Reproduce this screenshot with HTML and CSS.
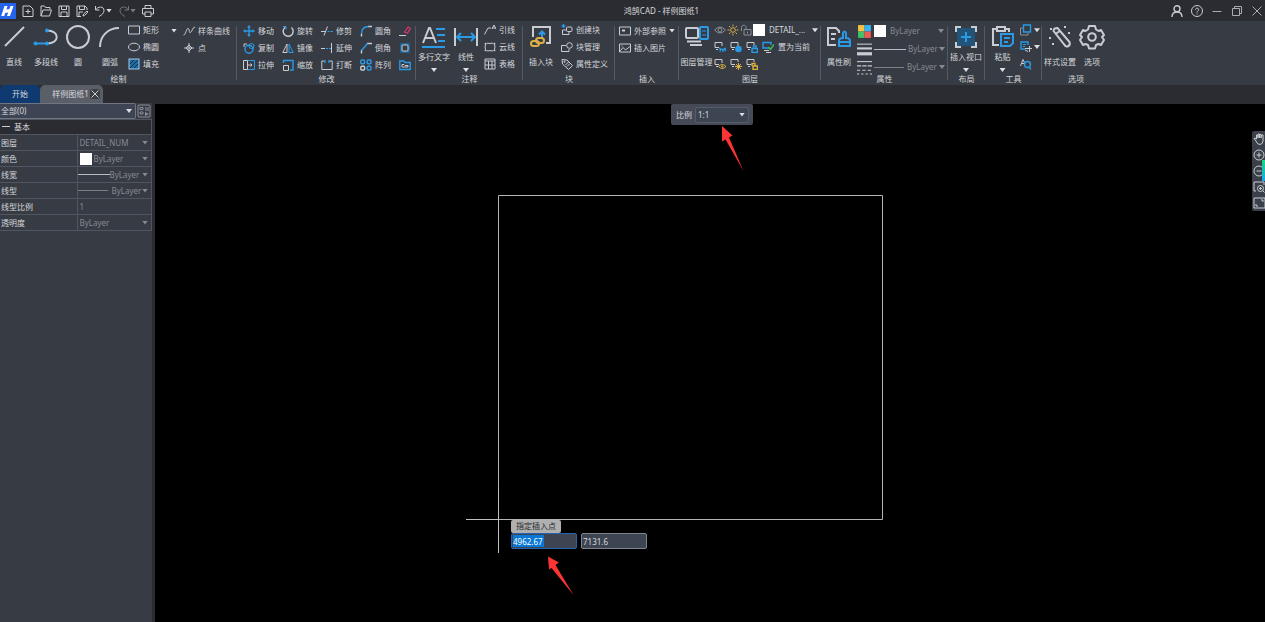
FILE: index.html
```html
<!DOCTYPE html>
<html lang="zh-CN">
<head>
<meta charset="utf-8">
<title>鸿鹄CAD - 样例图纸1</title>
<link rel="stylesheet" href="styles.css">
</head>
<body>
<div class="app">
<header class="titlebar">
  <div class="quick">
    <svg class="logo" viewBox="0 0 16 16"><rect width="16" height="16" fill="#2563eb"/><path d="M4.500 3h3l-1 3.500 3-.5 1-3h3l-3.500 10h-3l1.200-3.600-3 .6-1 3h-3z" fill="#fff"/></svg>
    <button aria-label="新建"><svg class="ic" viewBox="0 0 12 12"><path class="w" d="M1 1h7l3 3v7.500H1zM6 4v5M3.500 6.500h5"/></svg></button>
    <button aria-label="打开"><svg class="ic" viewBox="0 0 12 12"><path class="w" d="M1 11V1h3.500l1 1.500h4.500v2M1 11l2-6h8.500L9.500 11z"/></svg></button>
    <button aria-label="保存"><svg class="ic" viewBox="0 0 12 12"><path class="w" d="M1 1h10v10.500H1zM3.500 1v3.500h5V1M3 11V7h6v4"/></svg></button>
    <button aria-label="另存为"><svg class="ic" viewBox="0 0 12 12"><path class="w" d="M11 5V3L9 1H1v10.500h4M3.500 1v3.500h5V1M3 11V7h4M7 11l.5-2L11 6l1 1-3.500 3.500z"/></svg></button>
    <button aria-label="撤销" class="drop"><svg class="ic" viewBox="0 0 12 12"><path class="w" d="M1.500 1v4h4M1.500 5C4 1 10 1 10 5.500 10 8 8 10 5 11.500"/></svg><i class="tri"></i></button>
    <button aria-label="重做" class="drop dim"><svg class="ic" viewBox="0 0 12 12"><path class="w" d="M10.500 1v4h-4M10.500 5C8 1 2 1 2 5.500 2 8 4 10 7 11.500"/></svg><i class="tri"></i></button>
    <button aria-label="打印"><svg class="ic" viewBox="0 0 12 12"><path class="w" d="M3 3.500V.5h6v3M3 9H.5V3.500h11V9H9M3 7h6v4.500H3z"/></svg></button>
  </div>
  <h1 class="caption">鸿鹄CAD - 样例图纸1</h1>
  <div class="window">
    <button aria-label="用户"><svg class="ic" viewBox="0 0 12 12"><circle class="w mv" cx="6" cy="3.800" r="3"/><path class="w mv" d="M1 12c0-3 2-5 5-5s5 2 5 5"/></svg></button>
    <button aria-label="帮助"><svg class="ic" viewBox="0 0 12 12"><circle class="w" cx="6" cy="6" r="5.500"/><path class="w" d="M4.500 4.800C4.500 2.500 8 2.700 7.700 5 7.500 6 6 6 6 7.500M6 8.500v1"/></svg></button>
    <button aria-label="最小化"><svg class="ic g" viewBox="0 0 12 12"><path class="w" d="M1.500 6.500h9"/></svg></button>
    <button aria-label="还原"><svg class="ic g" viewBox="0 0 12 12"><path class="w" d="M1.500 3.500h7v7h-7zM3.500 3.500v-2h7v7h-2"/></svg></button>
    <button aria-label="关闭"><svg class="ic g" viewBox="0 0 12 12"><path class="w" d="M1.500 1.500l9 9M10.500 1.500l-9 9"/></svg></button>
  </div>
</header>

<nav class="ribbon">
  <section class="group g-draw">
    <div class="tools">
      <button class="big nar"><svg viewBox="0 0 26 26"><path class="w hv" d="M4 22L23 3"/></svg>直线</button>
      <button class="big"><svg viewBox="0 0 26 26"><path class="b hv" d="M2 19.500h13"/><path class="w hv" d="M14 19.500c13 0 13-13 0-13"/><circle class="bf" cx="2.500" cy="19.500" r="2"/><circle class="bf" cx="14" cy="19.500" r="2"/><circle class="bf" cx="14" cy="6.500" r="2"/></svg>多段线</button>
      <button class="big nar"><svg viewBox="0 0 26 26"><circle class="w hv" cx="13" cy="13" r="11"/></svg>圆</button>
      <button class="big"><svg viewBox="0 0 26 26"><path class="w hv" d="M3 23C3 12 11 4 22 4"/></svg>圆弧</button>
      <div class="col">
        <button class="sm"><svg class="ic" viewBox="0 0 12 12"><path class="w" d="M.5 2h11v8H.5z"/></svg>矩形</button>
        <button class="sm"><svg class="ic" viewBox="0 0 12 12"><ellipse class="w" cx="6" cy="6" rx="5.500" ry="3.800"/></svg>椭圆</button>
        <button class="sm"><svg class="ic" viewBox="0 0 12 12"><rect x="1" y="1" width="10" height="10" fill="#1d6ea8" stroke="#a9c4dc"/><path d="M2 6l4-4M2 10l8-8M6 10l4-4" stroke="#142c42"/></svg>填充</button>
      </div>
      <div class="col arrowcol"><button class="sm" aria-label="更多矩形"><i class="tri"></i></button></div>
      <div class="col">
        <button class="sm"><svg class="ic" viewBox="0 0 12 12"><path class="w" d="M.5 10C3 10 3 3.500 5 3.500s.5 5 2.500 4S9 2.500 12 2"/></svg>样条曲线</button>
        <button class="sm"><svg class="ic" viewBox="0 0 12 12"><path class="w" d="M6 1v10M1 6h10M6 3L9 6 6 9 3 6z"/></svg>点</button>
      </div>
    </div>
    <h2>绘制</h2>
  </section>

  <section class="group g-modify">
    <div class="tools grid5">
      <button class="sm"><svg class="ic" viewBox="0 0 12 12"><path class="b mv" d="M6 1v10M1 6h10"/><path class="bf" d="M6 0l2 2.500H4zM6 12l2-2.500H4zM0 6l2.500-2v4zM12 6L9.500 4v4z"/></svg>移动</button>
      <button class="sm"><svg class="ic" viewBox="0 0 12 12"><path class="w mv" d="M3.500 2A5 5 0 1 0 9.500 2.500"/><path class="b" d="M1 1.500h3v3"/></svg>旋转</button>
      <button class="sm"><svg class="ic" viewBox="0 0 12 12"><path class="w" d="M0 6.500h4M3 10.500l3.500-9"/><path class="b" d="M6.500 6.500h2M9.500 6.500H12"/></svg>修剪</button>
      <button class="sm"><svg class="ic" viewBox="0 0 12 12"><path class="w mv" d="M1.500 11.500V8.500M8 1.500h4"/><path class="b mv" d="M1.500 9c0-5 3-7.500 7-7.500"/></svg>圆角</button>
      <button class="sm" aria-label="删除"><svg class="ic" viewBox="0 0 12 12"><path class="w" d="M0 10.500h7"/><path d="M5.500 7L9 2l2.500 1.500L8.500 8z" fill="none" stroke="#d1396b" stroke-width="1.300"/></svg></button>
      <button class="sm"><svg class="ic" viewBox="0 0 12 12"><circle class="b mv" cx="6" cy="7.200" r="4"/><path class="w" d="M1 5V2h3"/><circle class="b" cx="8.500" cy="4" r="2.500"/></svg>复制</button>
      <button class="sm"><svg class="ic" viewBox="0 0 12 12"><path class="w" d="M5 2v8.500H.8z"/><path class="b" d="M7 2v8.500h4.200z" fill="#1d6ea8"/></svg>镜像</button>
      <button class="sm"><svg class="ic" viewBox="0 0 12 12"><path class="w" d="M0 6.500h4M10.500 1v10"/><path class="b" d="M5 6.500h2M8 6.500h2"/></svg>延伸</button>
      <button class="sm"><svg class="ic" viewBox="0 0 12 12"><path class="w mv" d="M1.500 11.500V8M7 1.500h5"/><path class="b mv" d="M1.500 8.500l6-7"/></svg>倒角</button>
      <button class="sm" aria-label="分解"><svg class="ic" viewBox="0 0 12 12"><rect x="1" y="1" width="10" height="10" rx="1.500" fill="#1f6595"/><rect x="3" y="3" width="6" height="6" rx="1" fill="#373b43" stroke="#c9ccd1"/></svg></button>
      <button class="sm"><svg class="ic" viewBox="0 0 12 12"><path class="b" d="M4.500 1.500h7v9h-7"/><path class="w" d="M4.500 1.500h-4v9h4zM4.500 6H9M7.500 4.500L9 6 7.500 7.500"/></svg>拉伸</button>
      <button class="sm"><svg class="ic" viewBox="0 0 12 12"><path class="b mv" d="M1.500 4V1.500h9.500V11H8"/><path class="w" d="M1.500 6.500h5v5h-5z"/></svg>缩放</button>
      <button class="sm"><svg class="ic" viewBox="0 0 12 12"><path class="w" d="M3.500 2H.8v8.500h10.400V2H8.500"/><path class="b mv" d="M4 1v3M8 1v3"/></svg>打断</button>
      <button class="sm"><svg class="ic" viewBox="0 0 12 12"><rect class="w mv" x=".8" y="7.200" width="3.800" height="3.800" rx="1"/><rect class="b mv" x=".8" y="1" width="3.800" height="3.800" rx="1"/><rect class="b mv" x="7.200" y="1" width="3.800" height="3.800" rx="1"/><rect class="b mv" x="7.200" y="7.200" width="3.800" height="3.800" rx="1"/></svg>阵列</button>
      <button class="sm" aria-label="偏移"><svg class="ic" viewBox="0 0 12 12"><path class="b mv" d="M.8 2h4L6 3.500h5.200v7H.8z"/><path class="w" d="M3 8V5.500h2l1 1h3V8z"/></svg></button>
    </div>
    <h2>修改</h2>
  </section>

  <section class="group g-note">
    <div class="tools">
      <button class="big drp"><svg viewBox="0 0 26 26"><path class="w hv" d="M2 19L8 4h1l6 15M4 14h9"/><path class="b hv" d="M15 5h9M16 11h8M17 17h7M1 23h23"/></svg>多行文字<i class="tri"></i></button>
      <button class="big nar drp"><svg viewBox="0 0 26 26"><path class="w hv" d="M2 4v18M24 4v18"/><path class="b hv" d="M4 13h18M8 9l-4 4 4 4M18 9l4 4-4 4"/></svg>线性<i class="tri"></i></button>
      <div class="col">
        <button class="sm"><svg class="ic" viewBox="0 0 12 12"><path class="w" d="M.5 10.500L4 4h3M8 5l2-4 2 4M8.500 4h3"/></svg>引线</button>
        <button class="sm"><svg class="ic" viewBox="0 0 12 12"><path class="w" d="M1 2q1.500 1.500 3 0 2 1.500 4 0 1.500 1.500 3 0-1 2 0 4-1 2 0 4-1.500-1-3 0-2-1-4 0-1.500-1-3 0 1-2 0-4 1-2 0-4z"/></svg>云线</button>
        <button class="sm"><svg class="ic" viewBox="0 0 12 12"><path class="w" d="M1 1h10v10H1zM1 3h10M1 7h10M4.500 3v8M8 3v8"/></svg>表格</button>
      </div>
    </div>
    <h2>注释</h2>
  </section>

  <section class="group g-block">
    <div class="tools">
      <button class="big"><svg viewBox="0 0 26 26"><path class="w hv" d="M5 13V3h17v16h-4"/><path class="b hv" d="M14 14V8M11 10.500L14 7.500l3 3"/><rect class="y hv" x="3" y="17" width="8" height="5" rx="2.500"/><rect class="y hv" x="8" y="14" width="8" height="5" rx="2.500"/></svg>插入块</button>
      <div class="col">
        <button class="sm"><svg class="ic" viewBox="0 0 12 12"><path class="b mv" d="M2.500 0v4M.5 2h4"/><path class="w" d="M1.500 6v4.500H8V8M1.500 6H5"/><rect class="w" x="5.500" y="3" width="5.500" height="4.500" rx="1"/></svg>创建块</button>
        <button class="sm"><svg class="ic" viewBox="0 0 12 12"><path class="w" d="M5 4.500H.5v6H8V8"/><circle class="w" cx="8.500" cy="4.500" r="2.800"/></svg>块管理</button>
        <button class="sm"><svg class="ic" viewBox="0 0 12 12"><path class="w" d="M1 1.500l5 .5 5.500 5.500-4 4L1.500 6zM4.500 7l3-3M6 8.500l3-3"/><circle class="w" cx="3.500" cy="3.700" r=".7"/></svg>属性定义</button>
      </div>
    </div>
    <h2>块</h2>
  </section>

  <section class="group g-insert">
    <div class="tools">
      <div class="col">
        <button class="sm"><svg class="ic" viewBox="0 0 12 12"><path class="w" d="M.5 2h11v8H.5z"/><path d="M3 4.500h3v2H3z" fill="#c9ccd1"/></svg>外部参照<i class="tri"></i></button>
        <button class="sm"><svg class="ic" viewBox="0 0 12 12"><path class="w" d="M.5 2h11v8H.5zM1 9l3-3.500L6.500 8 11 4.500M3 3.500v1"/></svg>插入图片</button>
      </div>
    </div>
    <h2>插入</h2>
  </section>

  <section class="group g-layer">
    <div class="tools">
      <button class="big"><svg viewBox="0 0 26 26"><rect class="w hv" x="2" y="4" width="12" height="10" rx="1"/><path class="w hv" d="M3 17.500h14M6 21h12"/><rect class="b hv" x="16" y="3" width="8" height="12" rx="1"/><path class="b" d="M18 7h4M18 11h4"/></svg>图层管理</button>
      <div class="col">
        <div class="line">
          <button aria-label="可见"><svg class="ic" viewBox="0 0 12 12"><path class="w dimw" d="M.5 6Q6 0 11.500 6 6 12 .5 6z"/><circle class="w dimw" cx="6" cy="6" r="2"/></svg></button>
          <button aria-label="冻结"><svg class="ic" viewBox="0 0 12 12"><circle class="y" cx="6" cy="6" r="2.300"/><path class="y" d="M6 .5v2M6 9.500v2M.5 6h2M9.500 6h2M2 2l1.500 1.500M8.500 8.500L10 10M10 2L8.500 3.500M3.500 8.500L2 10"/></svg></button>
          <button aria-label="锁定"><svg class="ic" viewBox="0 0 12 12"><path class="w dimw" d="M4 5.500h7v5.500H4zM1.500 7V3.500c0-3 4.500-3 4.500 0v2M7.500 7.500v2"/></svg></button>
          <span class="swatch"></span>
          <span class="sel lay"><select aria-label="当前图层"><option>DETAIL_...</option></select></span>
        </div>
        <div class="line wide">
          <button aria-label="关闭图层"><svg class="ic" viewBox="0 0 12 12"><path class="w" d="M5 6.500H1v-5h7V5M2 8.500h2"/><path class="b mv" d="M5 7q3.500 3 7 0M6 10.500l.5-2M9 11V9M11.500 10L11 8"/></svg></button>
          <button aria-label="冻结图层"><svg class="ic" viewBox="0 0 12 12"><path class="w" d="M5 6.500H1v-5h7V5M2 8.500h2"/><circle class="bf" cx="8.500" cy="8" r="3.300"/></svg></button>
          <button aria-label="锁定图层"><svg class="ic" viewBox="0 0 12 12"><path class="w" d="M5 6.500H1v-5h7V4M2 8.500h2"/><path class="b mv" d="M6 7.500h5.500v4H6zM7.500 7V5H10v2"/></svg></button>
          <button class="txt"><svg class="ic" viewBox="0 0 12 12"><path class="b mv" d="M7 7H1V1.500h8V4"/><path class="w" d="M2 9.500h5M4 11.500h5"/><path d="M6.500 6l2 2.500L12 3.500" fill="none" stroke="#3fb950" stroke-width="1.500"/></svg>置为当前</button>
        </div>
        <div class="line wide">
          <button aria-label="打开图层"><svg class="ic" viewBox="0 0 12 12"><path class="w" d="M5 6.500H1v-5h7V5M2 8.500h2"/><path class="y" d="M4.500 8.500q3.700-4 7.500 0-3.800 4-7.500 0z"/><circle class="y" cx="8.300" cy="8.500" r=".8"/></svg></button>
          <button aria-label="解冻图层"><svg class="ic" viewBox="0 0 12 12"><path class="w" d="M5 6.500H1v-5h7V4M2 8.500h2"/><path class="y" d="M8.500 5v7M5 8.500h7M6 6l5 5M11 6l-5 5"/></svg></button>
          <button aria-label="解锁图层"><svg class="ic" viewBox="0 0 12 12"><path class="w" d="M5 6.500H1v-5h7V4M2 8.500h2"/><path class="y mv" d="M7 8h4.500v3.500H7zM6 8V5.500h3V8"/></svg></button>
        </div>
      </div>
    </div>
    <h2>图层</h2>
  </section>

  <section class="group g-attr">
    <div class="tools">
      <button class="big"><svg viewBox="0 0 26 26"><path class="w hv" d="M10 21H2V4h8l3 3v2M5 10h5M5 15h4"/><path class="b hv" d="M13 22v-5q0-3 4-3V9q1.500-3 3 0v5q4 0 4 3v5zM13 18h11"/></svg>属性刷</button>
      <div class="col tall">
        <div class="line">
          <svg class="ic mid" viewBox="0 0 14 14"><path fill="#f6c445" d="M1 1h6v6H1z"/><path fill="#35b5f5" d="M7 1h6v6H7z"/><path fill="#3fc26b" d="M1 7h6v6H1z"/><path fill="#ee5a52" d="M7 7h6v6H7z"/></svg>
          <span class="swatch"></span>
          <span class="sel by"><select aria-label="颜色"><option>ByLayer</option></select></span>
        </div>
        <div class="line">
          <svg class="ic mid" viewBox="0 0 14 14"><path d="M0 2h14" stroke="#c9ccd1"/><path d="M0 6h14" stroke="#c9ccd1" stroke-width="2"/><path d="M0 11h14" stroke="#c9ccd1" stroke-width="3"/></svg>
          <span class="rule"></span>
          <span class="sel by"><select aria-label="线宽"><option>ByLayer</option></select></span>
        </div>
        <div class="line">
          <svg class="ic mid" viewBox="0 0 14 14"><path class="w" d="M0 1.500h14"/><path class="w" stroke-dasharray="4 1" d="M0 5.500h14"/><path class="w" stroke-dasharray="3 2" d="M0 9.500h14"/><path class="w" stroke-dasharray="2 2" d="M0 13h14"/></svg>
          <span class="rule thin"></span>
          <span class="sel by"><select aria-label="线型"><option>ByLayer</option></select></span>
        </div>
      </div>
    </div>
    <h2>属性</h2>
  </section>

  <section class="group g-layout">
    <div class="tools">
      <button class="big drp"><svg viewBox="0 0 26 26"><rect x="4" y="4" width="18" height="18" fill="#22547a"/><path class="w hv" d="M3 8V3h5M18 3h5v5M23 18v5h-5M8 23H3v-5"/><path class="b hv" d="M13 8v10M8 13h10"/></svg>插入视口<i class="tri"></i></button>
    </div>
    <h2>布局</h2>
  </section>

  <section class="group g-tools">
    <div class="tools">
      <button class="big drp"><svg viewBox="0 0 26 26"><path class="w hv" d="M9 21H3V5h4M15 5h4v3M7 3h8v4H7z"/><path class="b hv" d="M11 10h12v9l-3 3h-9zM14 14h6M14 18h4"/></svg>粘贴<i class="tri"></i></button>
      <div class="col">
        <button class="sm tight" aria-label="复制"><svg class="ic" viewBox="0 0 12 12"><path class="w dimw" d="M3.500 4h-3v7H8V9"/><path class="b mv" d="M3.500 1h7v7h-7z"/></svg><i class="tri"></i></button>
        <button class="sm tight" aria-label="剪切"><svg class="ic" viewBox="0 0 12 12"><path class="b mv" d="M5 8H1V1h7v3"/><path class="b" d="M3 3.500h3M3 5.500h2"/><path class="w" d="M5 7.500h7M9.500 5v6M5 9l3 1.500"/></svg><i class="tri"></i></button>
        <button class="sm tight" aria-label="查找"><svg class="ic" viewBox="0 0 12 12"><path class="w" d="M.5 8L3 1.500 5 6M1.500 5.500H4"/><circle class="b mv" cx="7.500" cy="6.500" r="3"/><path class="b mv" d="M9 9l2 2.500"/></svg></button>
      </div>
    </div>
    <h2>工具</h2>
  </section>

  <section class="group g-opt">
    <div class="tools">
      <button class="big"><svg viewBox="0 0 26 26"><path class="w hv" d="M6.500 7q0-3 4-3l12 14q1 3-1 4t-3 0zM8.500 10l5-3.500"/><path class="w hv" d="M3 13v2M3 5h2M17 3h2M22 8v2M6 19v2"/></svg>样式设置</button>
      <button class="big nar"><svg viewBox="0 0 26 26"><path class="w hv" stroke-linejoin="round" d="M10 2h6l1 3.500 2.500 1.500L22 6l3 5-2 2 2 3-3 5-2.500-1L17 21l-1 3.500h-6L9 21l-2.500-1L4 21l-3-5 2-3-2-2 3-5 2.500 1L9 5.500z"/><circle class="w hv" cx="13" cy="13" r="3.800"/></svg>选项</button>
    </div>
    <h2>选项</h2>
  </section>
</nav>

<div class="tabs">
  <button class="tab home">开始</button>
  <button class="tab doc">样例图纸1<svg viewBox="0 0 10 10"><rect width="10" height="10" rx="2" fill="#3b3e45"/><path class="w" d="M1.500 1.500l7 7M8.500 1.500l-7 7"/></svg></button>
</div>

<main class="work">
  <aside class="panel">
    <div class="pick">
      <span class="sel all"><select aria-label="选择集"><option>全部(0)</option></select></span>
      <button aria-label="快速选择"><svg viewBox="0 0 14 14"><rect class="w dimw" x="1" y="1" width="12" height="12" rx="1"/><path class="w dimw" d="M3 3.500h3v2H3zM3 8h3v2H3zM8 4h4M8 6h4"/><path d="M8 8l4 2-4 2z" fill="#8b8f96"/></svg></button>
    </div>
    <table class="props">
      <colgroup><col class="names"><col></colgroup>
      <thead><tr><th colspan="2"><span class="minus"></span>基本</th></tr></thead>
      <tbody>
        <tr><th>图层</th><td><span class="sel"><select aria-label="图层"><option>DETAIL_NUM</option></select></span></td></tr>
        <tr><th>颜色</th><td><div class="cell"><span class="swatch"></span><span class="sel"><select aria-label="颜色"><option>ByLayer</option></select></span></div></td></tr>
        <tr><th>线宽</th><td><div class="cell"><span class="rule"></span><span class="sel"><select aria-label="线宽"><option>ByLayer</option></select></span></div></td></tr>
        <tr><th>线型</th><td><div class="cell"><span class="rule thin"></span><span class="sel"><select aria-label="线型"><option>ByLayer</option></select></span></div></td></tr>
        <tr><th>线型比例</th><td><input aria-label="线型比例" value="1"></td></tr>
        <tr><th>透明度</th><td><span class="sel"><select aria-label="透明度"><option>ByLayer</option></select></span></td></tr>
      </tbody>
    </table>
  </aside>

  <div class="canvas">
    <svg class="drawing" width="900" height="518" viewBox="0 0 900 518">
      <path d="M343.500 91.500h384v324h-384z" fill="none" stroke="#b4b4b4"/>
      <path d="M311 415.500h33M343.500 383v66" stroke="#c0c0c0"/>
      <path d="M567 22l10.500 9.500-3.500 2 14.500 33.500-18-31.500-3.500 2zM393 452.500l11 6-3.500 2.500 18 30-22-27-2.500 1.500z" fill="#fb3434"/>
    </svg>
    <div class="scale"><label for="scale">比例</label><span class="sel"><select id="scale"><option>1:1</option></select></span></div>
    <div class="prompt">
      <label class="tip" for="px">指定插入点</label>
      <div class="coords"><input id="px" class="on" value="4962.67"><input aria-label="Y 坐标" value="7131.6"></div>
    </div>
    <div class="viewbar">
      <button aria-label="平移"><svg class="ic" viewBox="0 0 12 12"><path class="w" d="M3 8L1 5.500 2 5l1.500 1V2h1.500v3V1h1.500v4V1.500H8V5l.5-3H10v6q0 3-3 3.500-3 0-4-3.500z"/></svg></button>
      <button aria-label="放大"><svg class="ic" viewBox="0 0 12 12"><circle class="w" cx="6" cy="6" r="5"/><path class="w" d="M6 3.500v5M3.500 6h5"/></svg></button>
      <button aria-label="缩小"><svg class="ic" viewBox="0 0 12 12"><circle class="w" cx="6" cy="6" r="5"/><path class="w" d="M3.500 6h5"/></svg></button>
      <button aria-label="窗口缩放"><svg class="ic" viewBox="0 0 12 12"><path class="w" d="M3 10H1V1h10v3"/><circle class="w" cx="7.500" cy="7.500" r="3"/><path class="w" d="M7.500 6v3M6 7.500h3M9.500 9.500l2 2"/></svg></button>
      <button aria-label="范围缩放"><svg class="ic" viewBox="0 0 12 12"><path class="w" d="M1 1h11v10H1zM3 7v2h2M8 3h2v2"/></svg></button>
      <i class="glow"></i>
    </div>
  </div>
</main>
</div>
</body>
</html>
```
FILE: styles.css
```css
* { box-sizing: border-box; }
html, body { height: 100%; margin: 0; }
body, button, select, input {
  font-family: "Noto Sans", "Noto Sans CJK SC", sans-serif;
  font-size: 8px;
  line-height: 12px;
  color: #d6d8dc;
}
body { background: #2b2c31; overflow: hidden; }
button, select, input {
  appearance: none;
  border: 0;
  margin: 0;
  padding: 0;
  background: none;
  white-space: nowrap;
}
button { display: flex; align-items: center; }
svg { display: block; flex: none; }
h1, h2 { margin: 0; font-size: 8px; font-weight: 400; line-height: 12px; }

.app { display: flex; flex-direction: column; height: 100%; }
.ic { width: 12px; height: 12px; }
.mid { width: 15px; height: 15px; }
.w { fill: none; stroke: #c9ccd1; stroke-width: 1; }
.b { fill: none; stroke: #2a9ae6; stroke-width: 1; }
.y { fill: none; stroke: #dcb045; stroke-width: 1; }
.bf { fill: #2a9ae6; }
.mv { stroke-width: 1.4; }
.hv { stroke-width: 2; }
.dimw { stroke: #8b8f96; }
.g { opacity: .8; }
.tri {
  flex: none;
  width: 6px;
  height: 4px;
  background: #dcdee1;
  clip-path: polygon(0 0, 100% 0, 50% 100%);
}
.swatch { flex: none; width: 12px; height: 12px; background: #fff; }
.rule { flex: none; width: 32px; height: 1px; background: #b9bcc2; }
.rule.thin { width: 30px; background: #7b7f87; }
.sel { position: relative; display: flex; flex: 1; align-items: center; }
.sel select { width: 100%; height: 14px; }
.sel::after {
  content: "";
  position: absolute;
  right: 3px;
  width: 6px;
  height: 4px;
  background: #dcdee1;
  clip-path: polygon(0 0, 100% 0, 50% 100%);
  pointer-events: none;
}

.titlebar {
  display: grid;
  grid-template-columns: 1fr auto 1fr;
  align-items: center;
  height: 21px;
  background: #2b2c31;
}
.quick { display: flex; align-items: center; gap: 6px; }
.quick .drop { gap: 0; }
.logo { width: 16px; height: 16px; }
.dim { opacity: .45; }
.caption { padding-left: 58px; }
.window { display: flex; justify-content: flex-end; gap: 8px; padding-right: 2px; }

.ribbon {
  display: flex;
  height: 64px;
  background: #373b43;
}
.group {
  position: relative;
  display: flex;
  flex: none;
  flex-direction: column;
  justify-content: space-between;
}
.group::after {
  content: "";
  position: absolute;
  right: 0;
  top: 5px;
  bottom: 5px;
  width: 1px;
  background: #555962;
}
.group:last-child::after { display: none; }
.group h2 { text-align: center; }
.tools { display: flex; height: 51px; padding-top: 1px; }
.g-draw { width: 237px; }
.g-modify { width: 179px; }
.g-note { width: 107px; }
.g-block { width: 92px; }
.g-insert { width: 64px; }
.g-layer { width: 142px; }
.g-attr { width: 127px; }
.g-layout { width: 37px; }
.g-tools { width: 57px; }
.g-opt { width: 68px; }
.big {
  flex: none;
  flex-direction: column;
  width: 36px;
  height: 50px;
  padding-top: 2px;
  gap: 6px;
}
.big svg { width: 26px; height: 26px; }
.nar { width: 28px; }
.drp { gap: 1px; }
.drp .tri { margin-top: 4px; }
.col { display: flex; flex-direction: column; }
.sm { height: 17px; gap: 3px; }
.tight { gap: 2px; }
.arrowcol { padding: 0 6px 0 12px; }
.grid5 {
  display: grid;
  grid-template-columns: repeat(5, 39px);
  align-content: start;
  padding-left: 6px;
}
.g-modify .tools { width: 179px; overflow: hidden; }
.g-note .col { padding-left: 4px; }
.g-block .col { padding-left: 2px; }
.g-insert .col { padding-left: 4px; }
.g-layer .big, .g-tools .big { width: 35px; }
.line { display: flex; align-items: center; height: 17px; gap: 1px; }
.line.wide { gap: 4px; }
.txt { gap: 4px; }
.lay { flex: none; width: 52px; }
.lay select { padding-left: 3px; }
.lay::after { right: 0; }
.tall .line { flex: none; height: 18px; gap: 2px; }
.by { width: 56px; flex: none; }
.by select, .props select, .props input { color: #868a92; }
.by select { padding-left: 2px; }
.by::after { background: #868a92; right: 0; }
.line .rule + .by { width: 37px; }
.rule + .by select { padding-left: 0; }
.line .rule.thin + .by { width: 39px; }
.rule.thin + .by select { padding-left: 1px; }

.tabs { display: flex; height: 18px; background: #2b2c31; }
.tab { justify-content: center; border-radius: 5px 5px 0 0; }
.home { width: 40px; background: #0f3a70; }
.doc { width: 63px; gap: 1px; padding-left: 9px; background: #5a5e67; }
.doc svg { width: 10px; height: 10px; }

.work { display: flex; flex: 1; min-height: 0; }
.panel { flex: none; width: 155px; background: #373b43; border-right: 3px solid #2b2c31; }
.pick { display: flex; align-items: center; gap: 1px; height: 16px; }
.pick button svg { width: 14px; height: 14px; }
.all { flex: none; width: 136px; border: 1px solid #6f7682; border-left: 0; border-radius: 0 2px 2px 0; background: #3d4554; }
.all select { padding-left: 1px; }
.props { width: 152px; border-collapse: collapse; table-layout: fixed; }
.names { width: 77px; }
.props th, .props td {
  height: 16px;
  padding: 0;
  border: 1px solid #50555f;
  border-left: 0;
  font-weight: 400;
  text-align: left;
}
.props tbody th { padding-left: 1px; }
.props thead th { height: 15px; background: #2b2c31; }
.minus { display: inline-block; width: 8px; height: 1px; margin: 0 4px 3px 2px; background: #c9ccd1; }
.props .sel::after { background: #868a92; }
.props select, .props input { display: block; width: 100%; height: 14px; padding-left: 2px; }
.cell { display: flex; align-items: center; }
.cell .swatch { margin-left: 2px; }
.cell .rule + .sel select { padding-left: 0; }
.cell .rule.thin + .sel select { padding-left: 4px; }

.canvas { position: relative; flex: 1; overflow: hidden; border-top: 1px solid #2b2c31; background: #000; }
.drawing { position: absolute; left: 0; top: 0; }
.scale {
  position: absolute;
  left: 516px;
  top: 0;
  display: flex;
  align-items: center;
  gap: 3px;
  width: 82px;
  height: 21px;
  padding: 0 4px 0 5px;
  border-radius: 2px;
  background: #454a56;
}
.scale select { height: 16px; padding-left: 2px; border: 1px solid #565c68; border-radius: 2px; background: #3d4452; }
.scale .sel::after { right: 4px; }
.prompt { position: absolute; left: 356px; top: 416px; }
.tip { display: block; width: 50px; height: 13px; border-radius: 2px; background: #b0b0b0; color: #26282c; text-align: center; }
.coords { display: flex; gap: 4px; }
.coords input { width: 66px; height: 16px; padding-left: 1px; border: 1px solid #80848c; border-radius: 2px; background: #3d4452; }
.coords .on {
  border-color: #2563b0;
  color: #fff;
  background: linear-gradient(#0a78d6, #0a78d6) 1px 1px / 31px 12px no-repeat #3d4452;
}
.viewbar {
  position: absolute;
  left: calc(100% - 13px);
  top: 27px;
  display: flex;
  flex-direction: column;
  gap: 4px;
  padding: 2px 1px;
  border-radius: 2px 0 0 2px;
  background: #3b3f49;
}
.glow { position: absolute; left: 10px; top: 29px; width: 3px; height: 21px; background: linear-gradient(#18d884, #14a8e8); }
```
